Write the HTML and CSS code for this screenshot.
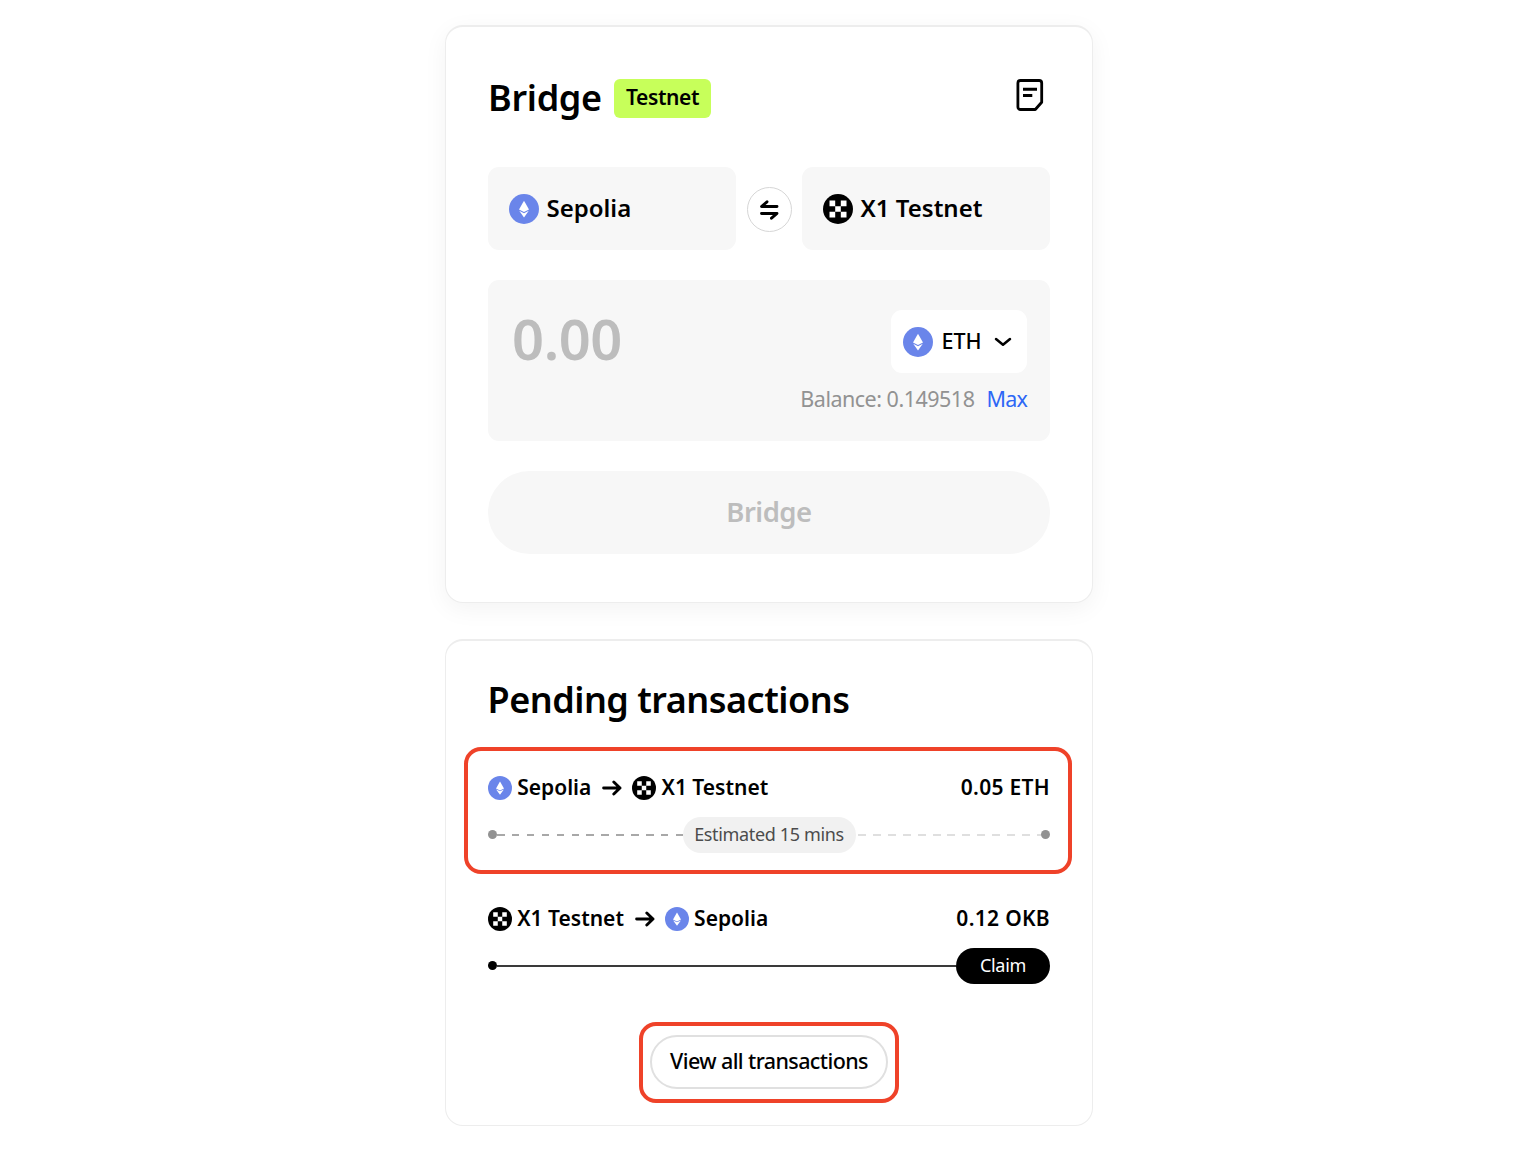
FILE: index.html
```html
<!DOCTYPE html>
<html lang="en">
<head>
<meta charset="utf-8">
<title>Bridge</title>
<link rel="stylesheet" href="styles.css">
</head>
<body>
<svg class="sprite" aria-hidden="true">
  <symbol id="eth" viewBox="0 0 30 30">
    <circle cx="15" cy="15" r="15" fill="#6a85ea"/>
    <path d="M15 6.800 10 15.600 15 18 20 15.600Z" fill="#fff"/>
    <path d="M10.200 16.800 15 19.200 19.800 16.800 15 23.400Z" fill="#fff"/>
  </symbol>
  <symbol id="x1" viewBox="0 0 30 30">
    <circle cx="15" cy="15" r="15" fill="#000"/>
    <path d="M6.500 6.500h5.700v5.700h-5.700zM17.800 6.500h5.700v5.700h-5.700zM12.200 12.200h5.600v5.600h-5.600zM6.500 17.800h5.700v5.700h-5.700zM17.800 17.800h5.700v5.700h-5.700z" fill="#fff"/>
  </symbol>
  <symbol id="arrow" viewBox="0 0 20 16">
    <path d="M1.600 8H18M11.800 2 18 8l-6.200 6" fill="none" stroke="#000" stroke-width="2.900" stroke-linecap="round" stroke-linejoin="round"/>
  </symbol>
</svg>
<main class="page">
  <section class="card bridge">
    <header class="head">
      <h1 class="title t-bridge">Bridge</h1>
      <span class="badge">Testnet</span>
      <svg class="history" viewBox="0 0 28 34"><path d="M4.500 2.500h18.600a2.600 2.600 0 0 1 2.600 2.600v19.200l-6.400 7.200H4.500a2.600 2.600 0 0 1-2.600-2.600V5.100a2.600 2.600 0 0 1 2.600-2.600z" fill="none" stroke="#000" stroke-width="2.800" stroke-linejoin="round"/><path d="M7 11.300h14M7 17.500h9.300" stroke="#000" stroke-width="2.900"/></svg>
    </header>
    <div class="networks">
      <div class="network"><svg class="coin"><use href="#eth"/></svg><span class="net-name">Sepolia</span></div>
      <button class="swap"><svg viewBox="0 0 20 20" width="20" height="20"><path d="M18 6.500H2.500L8 1.800M2.500 13.500H18l-5.500 4.700" fill="none" stroke="#000" stroke-width="2.900" stroke-linecap="round" stroke-linejoin="round"/></svg></button>
      <div class="network"><svg class="coin"><use href="#x1"/></svg><span class="net-name">X1 Testnet</span></div>
    </div>
    <div class="amount">
      <div class="amount-row">
        <span class="value">0.00</span>
        <button class="token"><svg class="coin"><use href="#eth"/></svg><span class="token-name">ETH</span><svg class="chevron" viewBox="0 0 18 10"><path d="M2 2 9 7.800 16 2" fill="none" stroke="#000" stroke-width="2.500" stroke-linecap="round" stroke-linejoin="round"/></svg></button>
      </div>
      <div class="balance"><span class="bal-text">Balance: 0.149518</span><a class="max">Max</a></div>
    </div>
    <button class="submit">Bridge</button>
  </section>

  <section class="card pending">
    <h2 class="title t-pending">Pending transactions</h2>
    <div class="tx highlight">
      <div class="tx-row">
        <svg class="mini"><use href="#eth"/></svg><span class="tx-name">Sepolia</span>
        <svg class="arrow"><use href="#arrow"/></svg>
        <svg class="mini"><use href="#x1"/></svg><span class="tx-name">X1 Testnet</span>
        <span class="sum">0.05 ETH</span>
      </div>
      <div class="track">
        <i class="dot gray"></i><i class="dash"></i><span class="estimate">Estimated 15 mins</span><i class="dash light"></i><i class="dot gray"></i>
      </div>
    </div>
    <div class="tx">
      <div class="tx-row">
        <svg class="mini"><use href="#x1"/></svg><span class="tx-name">X1 Testnet</span>
        <svg class="arrow"><use href="#arrow"/></svg>
        <svg class="mini"><use href="#eth"/></svg><span class="tx-name">Sepolia</span>
        <span class="sum">0.12 OKB</span>
      </div>
      <div class="track">
        <i class="dot"></i><i class="line"></i><button class="claim">Claim</button>
      </div>
    </div>
    <div class="all-wrap"><button class="all">View all transactions</button></div>
  </section>
</main>
</body>
</html>
```
FILE: styles.css
```css
* { box-sizing: border-box; }
body { margin: 0; background: #fff; color: #000; font-family: "Noto Sans", "Liberation Sans", sans-serif; }
button { border: 0; margin: 0; padding: 0; font: inherit; color: inherit; background: none; }
.sprite { position: absolute; width: 0; height: 0; }
.page { width: 648px; margin-left: 445px; padding-top: 25px; display: flex; flex-direction: column; gap: 36px; }
.card { border: solid #ededed; border-width: 2px 1px 1px; border-radius: 18px; background: #fff; padding: 0 42px; }
.bridge { height: 578px; padding-top: 52px; box-shadow: 0 6px 24px rgba(0, 0, 0, .05); }
.pending { height: 487px; padding-top: 34px; }
.title { margin: 0; font-size: 36px; font-weight: 600; line-height: 50px; white-space: nowrap; }
.t-bridge { width: 112px; margin-top: -2px; letter-spacing: -.3px; }
.t-pending { margin-left: -.5px; letter-spacing: -.5px; }
.head { display: flex; height: 39px; align-items: center; }
.badge { margin-left: 14px; width: 97px; height: 39px; line-height: 37px; text-align: center; border-radius: 6px; background: #c7ff5a; font-size: 21px; font-weight: 600; letter-spacing: -.4px; }
.history { width: 28px; height: 34px; margin: 0 6px 7px auto; }
.networks { display: flex; justify-content: space-between; align-items: center; margin-top: 49px; }
.network { display: flex; align-items: center; width: 248px; height: 83px; padding-left: 20.500px; border-radius: 11px; background: #f7f7f7; }
.coin { width: 30px; height: 30px; flex: none; }
.net-name { margin: -2px 0 0 8px; font-size: 24px; font-weight: 600; letter-spacing: 0; white-space: nowrap; }
.swap { width: 45px; height: 45px; margin-top: 2px; border: 1px solid #d6d6d6; border-radius: 50%; display: grid; place-items: center; }
.amount { margin-top: 30px; height: 161px; border-radius: 11px; background: #f7f7f7; padding: 30px 23px 0 24px; }
.amount-row { display: flex; justify-content: space-between; align-items: center; height: 63px; }
.value { margin-top: -6px; font-size: 56px; font-weight: 600; line-height: 63px; letter-spacing: -.4px; color: #bdbdbd; }
.token { display: flex; align-items: center; width: 136px; height: 63px; padding-left: 12px; border-radius: 11px; background: #fff; }
.token-name { width: 41px; margin: -2px 0 0 8px; font-size: 21.500px; font-weight: 500; }
.chevron { width: 18px; height: 10px; margin-left: 12px; }
.balance { display: flex; justify-content: flex-end; gap: 12px; margin-top: 11px; line-height: 30px; font-size: 21.500px; color: #929292; }
.bal-text { letter-spacing: -.5px; }
.max { color: #2d67f6; letter-spacing: -.8px; }
.submit { display: block; width: 100%; height: 83px; margin-top: 30px; padding-bottom: 2px; border-radius: 42px; background: #f7f7f7; color: #bdbdbd; font-size: 27.500px; font-weight: 600; letter-spacing: -.5px; }
.tx { display: flex; flex-direction: column; }
.highlight { width: 608px; height: 127px; margin: 22px -24px 31px; padding: 23px 18px 0 20px; border: 4px solid #ef4229; border-radius: 17px; }
.tx-row { display: flex; align-items: center; height: 28px; font-size: 21px; font-weight: 600; }
.mini { width: 24px; height: 24px; flex: none; }
.tx-name { margin: -2px 0 0 5.200px; letter-spacing: 0; white-space: nowrap; }
.arrow { width: 20px; height: 16px; margin: 0 10px 0 11px; }
.sum { margin: -2px 0 0 auto; letter-spacing: .3px; }
.track { display: flex; align-items: center; height: 36px; margin-top: 15px; }
.dot { width: 9px; height: 9px; margin-top: -1px; border-radius: 50%; background: #000; flex: none; }
.gray { background: #929292; }
.line { height: 2px; flex: 1; background: #3a3a3a; }
.dash { height: 2px; flex: 1; background: repeating-linear-gradient(90deg, #a8a8a8 0 7.500px, transparent 7.500px 14.900px); }
.light { background: repeating-linear-gradient(90deg, transparent 0 2px, #dfdfdf 2px 10px, transparent 10px 14.900px); }
.estimate { width: 173px; height: 36px; line-height: 35px; border-radius: 18px; background: #f1f1f1; color: #4c4c4c; text-align: center; font-size: 18px; letter-spacing: -.35px; }
.claim { width: 94px; height: 36px; padding-bottom: 2px; border-radius: 18px; background: #000; color: #fff; font-size: 18px; letter-spacing: -.3px; }
.all-wrap { width: 260px; height: 81px; margin: 38px auto 0; border: 4px solid #ef4229; border-radius: 17px; display: grid; place-items: center; }
.all { width: 238px; height: 54px; margin-top: -2px; padding-bottom: 3px; border: 2px solid #e0e0e0; border-radius: 27px; font-size: 21.500px; font-weight: 500; letter-spacing: -.6px; }
```
